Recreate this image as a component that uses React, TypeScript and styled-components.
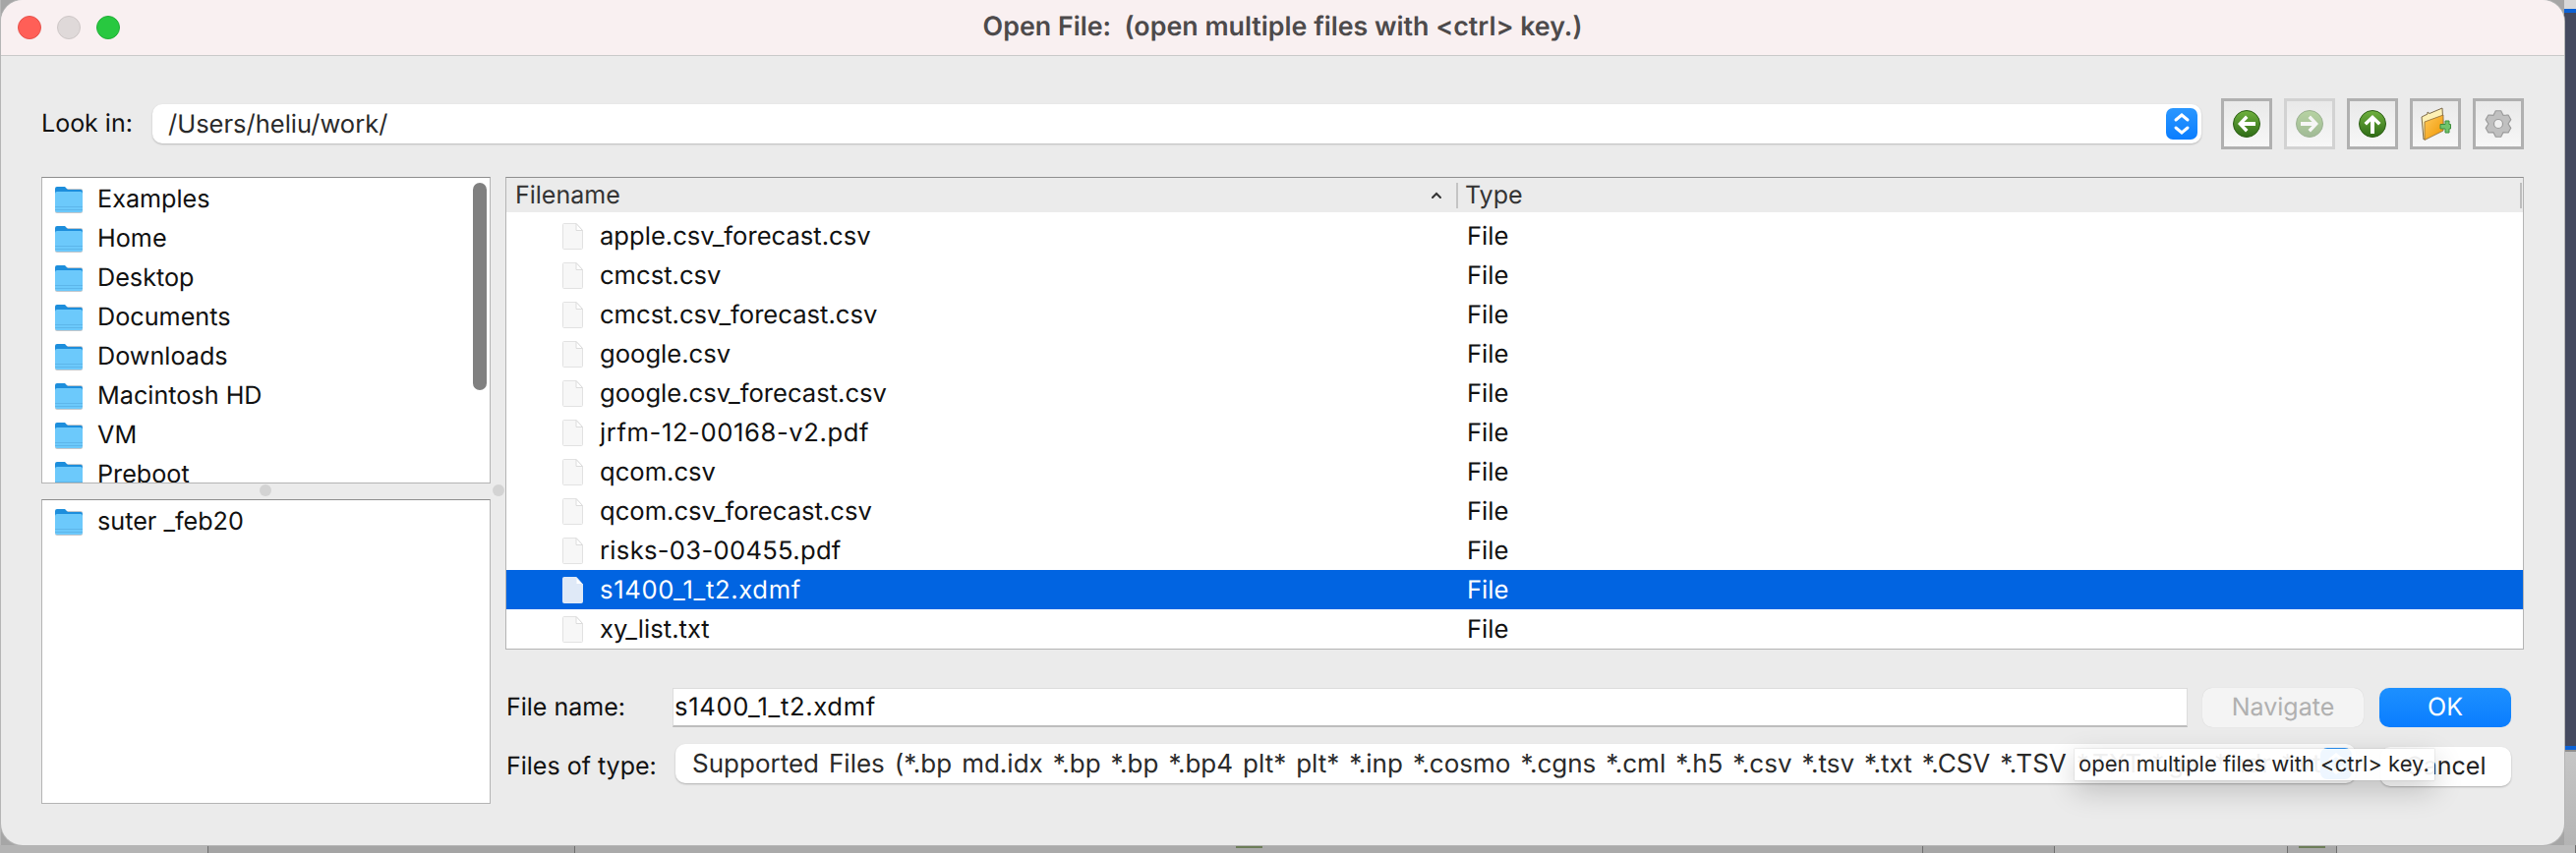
import * as React from 'react';
import styled, { createGlobalStyle } from 'styled-components';

const GlobalStyle = createGlobalStyle`
  html, body {
    margin: 0;
    padding: 0;
    width: 2620px;
    height: 868px;
    overflow: hidden;
    background: #a6a6a6;
  }
  * {
    box-sizing: border-box;
  }
`;

const Page = styled.div`
  display: grid;
  grid-template-columns: 1px 2607px 12px;
  grid-template-rows: 860px 8px;
  width: 2620px;
  height: 868px;
  font-family: Inter, 'Liberation Sans', sans-serif;
  text-rendering: geometricPrecision;
  background: #a6a6a6;
`;

const LeftEdge = styled.div`
  background: #b8b8b8;
`;

const Window = styled.div`
  display: flex;
  flex-direction: column;
  background: #ebebeb;
  border-radius: 22px;
  box-shadow: 0 0 0 1px #b5b5b5;
  overflow: hidden;
  position: relative;
`;

const TitleBar = styled.div`
  display: flex;
  align-items: center;
  justify-content: center;
  height: 57px;
  flex: none;
  background: #f9f0f1;
  border-bottom: 1px solid #c9c9c9;
  position: relative;
`;

const Lights = styled.div`
  position: absolute;
  left: 17px;
  top: 16px;
  display: flex;
  gap: 16px;
`;

const Light = styled.span<{ $color: string; $edge: string }>`
  width: 24px;
  height: 24px;
  border-radius: 50%;
  background: ${p => p.$color};
  border: 1px solid ${p => p.$edge};
`;

const Title = styled.div`
  font-size: 26.8px;
  font-weight: 600;
  color: #4d4a4b;
  white-space: pre;
  margin-top: -2px;
`;

const Body = styled.div`
  display: flex;
  flex-direction: column;
  padding: 43px 40px 0 41px;
`;

const Toolbar = styled.div`
  display: flex;
  align-items: center;
  height: 52px;
`;

const Label = styled.div<{ $w: number }>`
  flex: none;
  width: ${p => p.$w}px;
  font-size: 25px;
  color: #111;
  white-space: nowrap;
`;

const LookIn = styled.div`
  display: flex;
  align-items: center;
  justify-content: space-between;
  width: 2084px;
  height: 40px;
  margin-right: 20px;
  padding: 0 4px 0 16px;
  background: #fff;
  border-radius: 10px;
  box-shadow: 0 1px 2px rgba(0, 0, 0, 0.22);
  font-size: 25.5px;
  color: #2a2a2a;
`;

const Stepper = styled.div`
  display: flex;
  align-items: center;
  justify-content: center;
  flex: none;
  width: 32px;
  height: 32px;
  border-radius: 7px;
  background: linear-gradient(#2a97ff, #0a7dff);
`;

const ToolGroup = styled.div`
  display: flex;
  gap: 12px;
`;

const ToolButton = styled.div<{ $dim?: boolean }>`
  display: flex;
  align-items: center;
  justify-content: center;
  width: 52px;
  height: 52px;
  border: 3px solid ${p => (p.$dim ? '#d2d2d2' : '#b0b0b0')};
  background: linear-gradient(#e9e9e9, #f7f7f7);
`;

const Main = styled.div`
  display: grid;
  grid-template-columns: 457px 2053px;
  column-gap: 15px;
  margin-top: 28px;
`;

const SideColumn = styled.div`
  display: flex;
  flex-direction: column;
  gap: 16px;
  position: relative;
`;

const SideList = styled.div<{ $h: number }>`
  height: ${p => p.$h}px;
  padding-top: 2px;
  background: #fff;
  border: 1px solid #b4b4b4;
  border-top-color: #8e8e8e;
  overflow: hidden;
  position: relative;
`;

const SideRow = styled.div`
  display: flex;
  align-items: center;
  gap: 15px;
  height: 40px;
  padding-left: 13px;
  font-size: 25.2px;
  color: #111;
  white-space: nowrap;
`;

const ScrollThumb = styled.div`
  position: absolute;
  top: 5px;
  left: 438px;
  width: 14px;
  height: 211px;
  border-radius: 7px;
  background: #808080;
`;

const SplitDot = styled.span<{ $left: number }>`
  position: absolute;
  top: 313px;
  left: ${p => p.$left}px;
  width: 12px;
  height: 12px;
  border-radius: 50%;
  background: #d3d3d3;
`;

const RightColumn = styled.div`
  display: flex;
  flex-direction: column;
`;

const Table = styled.div`
  height: 481px;
  background: #fff;
  border: 1px solid #b4b4b4;
  border-top-color: #8e8e8e;
  overflow: hidden;
`;

const TableHead = styled.div`
  display: flex;
  align-items: center;
  height: 35px;
  background: #ebebeb;
  font-size: 25px;
  color: #333;
`;

const NameHead = styled.div`
  display: flex;
  align-items: center;
  justify-content: space-between;
  width: 966px;
  padding: 0 14px 0 9px;
  flex: none;
`;

const HeadDivider = styled.span`
  width: 2px;
  height: 26px;
  background: #c4c4c4;
  flex: none;
`;

const TypeHead = styled.div`
  padding-left: 7px;
  flex: 1;
`;

const HeadGrip = styled.span`
  width: 2px;
  height: 26px;
  margin-right: 1px;
  background: #bdbdbd;
  flex: none;
`;

const TableRows = styled.div`
  padding-top: 4px;
`;

const FileRow = styled.div<{ $selected?: boolean }>`
  display: flex;
  align-items: center;
  height: 40px;
  font-size: 25.6px;
  color: ${p => (p.$selected ? '#fff' : '#111')};
  background: ${p => (p.$selected ? '#0164e1' : 'transparent')};
`;

const NameCell = styled.div`
  display: flex;
  align-items: center;
  gap: 16px;
  width: 977px;
  padding-left: 56px;
  flex: none;
`;

const FileName = styled.span<{ $track: number }>`
  letter-spacing: ${p => p.$track}px;
`;

const FormRow = styled.div<{ $top: number }>`
  display: flex;
  align-items: center;
  height: 40px;
  margin-top: ${p => p.$top}px;
  position: relative;
`;

const FormLabel = styled(Label)`
  padding-left: 1px;
`;

const NameInput = styled.div`
  display: flex;
  align-items: center;
  width: 1541px;
  height: 40px;
  padding-left: 1px;
  background: #fff;
  border: 1px solid #dcdcdc;
  border-bottom: 2px solid #bdbdbd;
  font-size: 25.6px;
  letter-spacing: 0.67px;
  color: #111;
`;

const ActionButton = styled.div<{ $kind: 'primary' | 'disabled' | 'plain'; $w: number; $left: number }>`
  display: flex;
  align-items: center;
  justify-content: center;
  flex: none;
  width: ${p => p.$w}px;
  height: 40px;
  margin-left: ${p => p.$left}px;
  border-radius: 10px;
  font-size: 25px;
  color: ${p => (p.$kind === 'primary' ? '#fff' : p.$kind === 'disabled' ? '#b0b0b0' : '#222')};
  background: ${p =>
    p.$kind === 'primary' ? 'linear-gradient(#1d90ff, #0a7dff)' : p.$kind === 'disabled' ? '#f4f4f4' : '#fff'};
  box-shadow: ${p => (p.$kind === 'plain' ? '0 1px 2px rgba(0,0,0,0.25)' : '0 0 1px rgba(0,0,0,0.15)')};
`;

const TypeCombo = styled.div`
  display: flex;
  align-items: center;
  width: 1709px;
  height: 40px;
  margin-left: 3px;
  margin-top: -6px;
  padding: 0 4px 0 17px;
  background: #fff;
  border-radius: 10px;
  box-shadow: 0 1px 2px rgba(0, 0, 0, 0.25);
  font-size: 26px;
  word-spacing: 2.7px;
  color: #2a2a2a;
  white-space: nowrap;
  overflow: hidden;
`;

const ComboText = styled.div`
  flex: 1;
  overflow: hidden;
`;

const Tooltip = styled.div`
  position: absolute;
  left: 1596px;
  top: 2px;
  display: flex;
  align-items: center;
  width: 366px;
  height: 32px;
  padding-left: 4px;
  background: rgba(255, 255, 255, 0.93);
  box-shadow: 0 0 1px rgba(0, 0, 0, 0.3), 0 10px 30px rgba(0, 0, 0, 0.2);
  font-size: 22px;
  color: #222;
  white-space: nowrap;
`;

const SideStrip = styled.div`
  display: flex;
  flex-direction: column;
  background: #454a5f;
`;

const StripCap = styled.div`
  height: 9px;
  background: #d8d8d8;
  flex: none;
`;

const StripBlue = styled.div`
  height: 4px;
  background: #0c62d6;
  flex: none;
`;

const StripFill = styled.div<{ $h: number }>`
  height: ${p => p.$h}px;
  flex: none;
  background: #454a5f;
`;

const StripFoot = styled.div`
  flex: 1;
  background: linear-gradient(#c6c6c6, #b4b4b4);
  border-top: 2px solid #8e8e8e;
`;

const BottomBar = styled.div`
  grid-column: 1 / 4;
  display: flex;
`;

const BarCell = styled.div<{ $w: number; $tone: string }>`
  width: ${p => p.$w}px;
  flex: none;
  display: flex;
  justify-content: center;
  background: ${p => p.$tone};
  border-right: 1px solid #6e6e6e;
`;

const BarMark = styled.span`
  width: 27px;
  height: 3px;
  background: #6c7d58;
`;

const look = ['Examples', 'Home', 'Desktop', 'Documents', 'Downloads', 'Macintosh HD', 'VM', 'Preboot'];
const files = [
  { name: 'apple.csv_forecast.csv', track: 0 },
  { name: 'cmcst.csv', track: 0 },
  { name: 'cmcst.csv_forecast.csv', track: 0 },
  { name: 'google.csv', track: 0 },
  { name: 'google.csv_forecast.csv', track: 0 },
  { name: 'jrfm-12-00168-v2.pdf', track: 0.6 },
  { name: 'qcom.csv', track: 0 },
  { name: 'qcom.csv_forecast.csv', track: 0 },
  { name: 'risks-03-00455.pdf', track: 0.3 },
  { name: 's1400_1_t2.xdmf', track: 0.67 },
  { name: 'xy_list.txt', track: 0 },
];
const typeText =
  'Supported Files (*.bp md.idx *.bp *.bp *.bp4 plt* plt* *.inp *.cosmo *.cgns *.cml *.h5 *.csv *.tsv *.txt *.CSV *.TSV *.TXT *.gal *.hdr *.vtk *.vtu *.vti';

const FolderIcon = () => (
  <svg width="28" height="28" viewBox="0 0 28 28">
    <rect x="0" y="3" width="28" height="25" rx="2" fill="#c2c7cc" />
    <path d="M0 3a2 2 0 0 1 2-2h8l3 3h13a2 2 0 0 1 2 2v4H0z" fill="#1d8edc" />
    <rect x="0" y="6" width="28" height="21" rx="2" fill="#6cc9fb" />
    <rect x="0" y="21" width="28" height="1" fill="#5db6ea" />
    <rect x="0" y="24" width="28" height="1" fill="#5db6ea" />
  </svg>
);

const FileIcon = ({ selected }: { selected?: boolean }) => (
  <svg width="23" height="29" viewBox="0 0 23 29">
    <path
      d="M1.5 2.5a1 1 0 0 1 1-1H15l6.5 7v18a1 1 0 0 1-1 1h-18a1 1 0 0 1-1-1z"
      fill={selected ? '#dfe9f7' : '#f7f7f7'}
      stroke={selected ? '#dfe9f7' : '#e2e2e2'}
    />
    <path d="M15 1.5v7h6.5z" fill="#fff" stroke={selected ? '#dfe9f7' : '#dcdcdc'} />
  </svg>
);

const Chevrons = () => (
  <svg width="18" height="26" viewBox="0 0 18 26" fill="none" stroke="#fff" strokeWidth="3" strokeLinecap="round">
    <path d="M3 9l6-5 6 5" />
    <path d="M3 17l6 5 6-5" />
  </svg>
);

const greenDisc = (id: string) => (
  <>
    <defs>
      <linearGradient id={id} x1="0" y1="0" x2="0" y2="1">
        <stop offset="0" stopColor="#6fb13e" />
        <stop offset="1" stopColor="#2f6c16" />
      </linearGradient>
    </defs>
    <circle cx="15" cy="15" r="13.5" fill={`url(#${id})`} stroke="#2c5e16" strokeWidth="1" />
  </>
);

const BackIcon = () => (
  <svg width="30" height="30" viewBox="0 0 30 30">
    {greenDisc('gBack')}
    <path d="M14 6.500L6 15l8 8.500 2.500-2.500-4-4H24v-4H12.500l4-4z" fill="#fff" />
  </svg>
);

const ForwardIcon = () => (
  <svg width="30" height="30" viewBox="0 0 30 30" opacity="0.42">
    {greenDisc('gFwd')}
    <path d="M16 6.500l8 8.500-8 8.500-2.500-2.500 4-4H6v-4h11.500l-4-4z" fill="#fff" />
  </svg>
);

const UpIcon = () => (
  <svg width="30" height="30" viewBox="0 0 30 30">
    {greenDisc('gUp')}
    <path d="M15 6l8.500 8-2.500 2.500-4-4V25h-4V12.500l-4 4L6.500 14z" fill="#fff" />
  </svg>
);

const NewFolderIcon = () => (
  <svg width="32" height="34" viewBox="0 0 32 34">
    <defs>
      <linearGradient id="gFolder" x1="0" y1="0" x2="1" y2="1">
        <stop offset="0" stopColor="#ffc95a" />
        <stop offset="1" stopColor="#ef9500" />
      </linearGradient>
    </defs>
    <path d="M2 10l6-3v-2l2 1.500 13-5.500 1 18-20 14z" fill="#fdf0b5" stroke="#7d6a4a" strokeWidth="1" />
    <path d="M5 15l19-7v16l-19 9.500z" fill="url(#gFolder)" stroke="#8a6a3a" strokeWidth="0.8" />
    <path d="M21 17.500h5v-3.500h4v3.500h1.500v4.500H30v4h-4v-4h-5z" fill="#71c46c" stroke="#3e8e3c" strokeWidth="1" />
  </svg>
);

// six tooth gear outline, same shape as the toolbar's settings button
const gearPath = () => {
  const pts: string[] = [];
  for (let i = 0; i < 6; i++) {
    const a = (Math.PI / 3) * i - Math.PI / 2;
    [
      [-0.3, 12],
      [-0.2, 13.5],
      [0.2, 13.5],
      [0.3, 12],
      [0.52, 10],
    ].forEach(([d, r]) => {
      pts.push(`${(16 + r * Math.cos(a + d)).toFixed(2)} ${(16 + r * Math.sin(a + d)).toFixed(2)}`);
    });
  }
  return `M${pts.join('L')}Z`;
};

const GearIcon = () => (
  <svg width="32" height="32" viewBox="0 0 32 32">
    <path d={gearPath()} fill="#c0c0c0" stroke="#9c9c9c" strokeWidth="1.200" strokeLinejoin="round" />
    <circle cx="16" cy="16" r="4.5" fill="#f0f0f0" stroke="#9c9c9c" strokeWidth="1.200" />
  </svg>
);

const SortCaret = () => (
  <svg width="12" height="8" viewBox="0 0 12 8" fill="none" stroke="#333" strokeWidth="2" strokeLinecap="round">
    <path d="M2 6l4-4 4 4" />
  </svg>
);

export default function App() {
  return (
    <Page>
      <GlobalStyle />
      <LeftEdge />
      <Window>
        <TitleBar>
          <Lights>
            <Light $color="#ff5f57" $edge="#e5524c" />
            <Light $color="#dfd9d9" $edge="#cdc6c6" />
            <Light $color="#28c840" $edge="#22ad37" />
          </Lights>
          <Title>{'Open File:  (open multiple files with <ctrl> key.)'}</Title>
        </TitleBar>
        <Body>
          <Toolbar>
            <Label $w={113}>Look in:</Label>
            <LookIn>
              /Users/heliu/work/
              <Stepper>
                <Chevrons />
              </Stepper>
            </LookIn>
            <ToolGroup>
              <ToolButton>
                <BackIcon />
              </ToolButton>
              <ToolButton $dim>
                <ForwardIcon />
              </ToolButton>
              <ToolButton>
                <UpIcon />
              </ToolButton>
              <ToolButton>
                <NewFolderIcon />
              </ToolButton>
              <ToolButton>
                <GearIcon />
              </ToolButton>
            </ToolGroup>
          </Toolbar>
          <Main>
            <SideColumn>
              <SideList $h={312}>
                {look.map(name => (
                  <SideRow key={name}>
                    <FolderIcon />
                    {name}
                  </SideRow>
                ))}
                <ScrollThumb />
              </SideList>
              <SideList $h={310}>
                <SideRow>
                  <FolderIcon />
                  suter _feb20
                </SideRow>
              </SideList>
              <SplitDot $left={222} />
              <SplitDot $left={459} />
            </SideColumn>
            <RightColumn>
              <Table>
                <TableHead>
                  <NameHead>
                    Filename
                    <SortCaret />
                  </NameHead>
                  <HeadDivider />
                  <TypeHead>Type</TypeHead>
                  <HeadGrip />
                </TableHead>
                <TableRows>
                  {files.map(({ name, track }) => {
                    const selected = name === 's1400_1_t2.xdmf';
                    return (
                      <FileRow key={name} $selected={selected}>
                        <NameCell>
                          <FileIcon selected={selected} />
                          <FileName $track={track}>{name}</FileName>
                        </NameCell>
                        File
                      </FileRow>
                    );
                  })}
                </TableRows>
              </Table>
              <FormRow $top={39}>
                <FormLabel $w={170}>File name:</FormLabel>
                <NameInput>s1400_1_t2.xdmf</NameInput>
                <ActionButton $kind="disabled" $w={164} $left={15}>
                  Navigate
                </ActionButton>
                <ActionButton $kind="primary" $w={134} $left={16}>
                  OK
                </ActionButton>
              </FormRow>
              <FormRow $top={20}>
                <FormLabel $w={170}>Files of type:</FormLabel>
                <TypeCombo>
                  <ComboText>{typeText}</ComboText>
                  <Stepper>
                    <Chevrons />
                  </Stepper>
                </TypeCombo>
                <ActionButton $kind="plain" $w={133} $left={25}>
                  Cancel
                </ActionButton>
                <Tooltip>{'open multiple files with <ctrl> key.'}</Tooltip>
              </FormRow>
            </RightColumn>
          </Main>
        </Body>
      </Window>
      <SideStrip>
        <StripCap />
        <StripBlue />
        <StripFill $h={746} />
        <StripBlue />
        <StripFoot />
      </SideStrip>
      <BottomBar>
        <BarCell $w={212} $tone="#b4b4b4" />
        <BarCell $w={373} $tone="#a4a4a4" />
        <BarCell $w={1371} $tone="#aaaaaa">
          <BarMark />
        </BarCell>
        <BarCell $w={134} $tone="#a6a6a6" />
        <BarCell $w={237} $tone="#b2b2b2" />
        <BarCell $w={50} $tone="#a8a8a8">
          <BarMark />
        </BarCell>
        <BarCell $w={243} $tone="#bcbcbc" />
      </BottomBar>
    </Page>
  );
}
